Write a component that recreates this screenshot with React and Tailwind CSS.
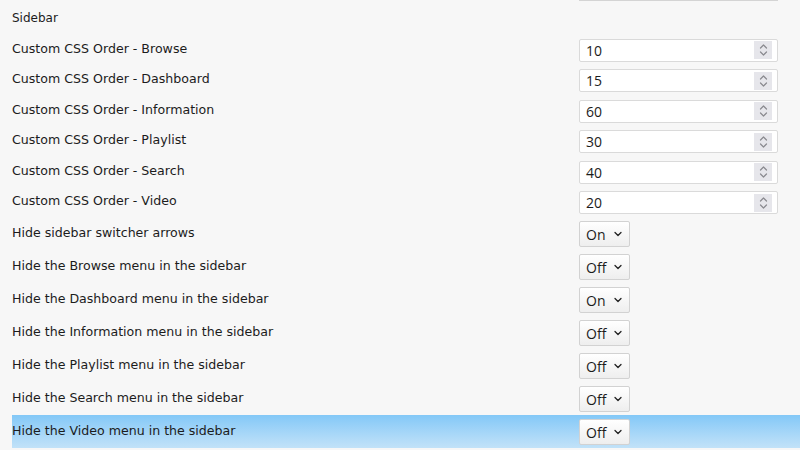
import React from "react";

const numRows = [
  ["Custom CSS Order - Browse", "10"],
  ["Custom CSS Order - Dashboard", "15"],
  ["Custom CSS Order - Information", "60"],
  ["Custom CSS Order - Playlist", "30"],
  ["Custom CSS Order - Search", "40"],
  ["Custom CSS Order - Video", "20"],
];

const selRows = [
  ["Hide sidebar switcher arrows", "On"],
  ["Hide the Browse menu in the sidebar", "Off"],
  ["Hide the Dashboard menu in the sidebar", "On"],
  ["Hide the Information menu in the sidebar", "Off"],
  ["Hide the Playlist menu in the sidebar", "Off"],
  ["Hide the Search menu in the sidebar", "Off"],
  ["Hide the Video menu in the sidebar", "Off"],
];

const labelFont = { fontFamily: '"DejaVu Sans", sans-serif' };
const ctrlFont = { fontFamily: '"Open Sans", "Noto Sans", sans-serif' };

function Spinner() {
  return (
    <div className="w-[18px] h-[18px] bg-[#e6e6eb] flex items-center justify-center mr-[5px]">
      <svg width="9" height="14" viewBox="0 0 9 14" fill="none" stroke="#8a8a8f" strokeWidth="1.2" strokeLinecap="round" strokeLinejoin="round">
        <path d="M1.5 5 L4.5 2 L7.5 5" />
        <path d="M1.5 9 L4.5 12 L7.5 9" />
      </svg>
    </div>
  );
}

function Chevron() {
  return (
    <svg width="8" height="6" viewBox="0 0 8 6" fill="none" stroke="#222" strokeWidth="1.3" strokeLinecap="round" strokeLinejoin="round">
      <path d="M1 1.5 L4 4.5 L7 1.5" />
    </svg>
  );
}

export default function App() {
  return (
    <div className="w-[800px] h-[450px] bg-[#f7f7f7] overflow-hidden text-[#1c1c1c]">
      <div className="h-[1px] flex">
        <div className="ml-[579px] w-[199px] h-[1px] bg-[#d4d4d4]" />
      </div>
      <div className="h-[33px] flex items-center pl-[12px] text-[12px]" style={labelFont}>
        Sidebar
      </div>
      {numRows.map(([label, val]) => (
        <div key={label} className="h-[30.5px] flex items-center pl-[12px]">
          <div className="w-[567px] text-[12.6px]" style={labelFont}>{label}</div>
          <div className="w-[199px] h-[23px] bg-white border border-[#dadada] rounded-[2px] flex items-center justify-between mt-[2px]">
            <span className="pl-[6px] text-[14px]" style={ctrlFont}>{val}</span>
            <Spinner />
          </div>
        </div>
      ))}
      {selRows.map(([label, val], i) => {
        const hl = i === selRows.length - 1;
        return (
          <div key={label} className="h-[33px] flex pl-[12px]">
            <div className={"flex-1 flex items-center " + (hl ? "bg-gradient-to-b from-[#83c8f7] to-[#c2e2f8]" : "")}>
              <div className="w-[567px] text-[12.6px]" style={labelFont}>{label}</div>
              <div className="w-[51px] h-[26px] border border-[#d2d2d2] rounded-[2px] bg-gradient-to-b from-[#ffffff] to-[#eeeeee] flex items-center justify-between pl-[6px] pr-[7px] mt-[1px]">
                <span className="text-[14px]" style={ctrlFont}>{val}</span>
                <Chevron />
              </div>
            </div>
          </div>
        );
      })}
    </div>
  );
}
